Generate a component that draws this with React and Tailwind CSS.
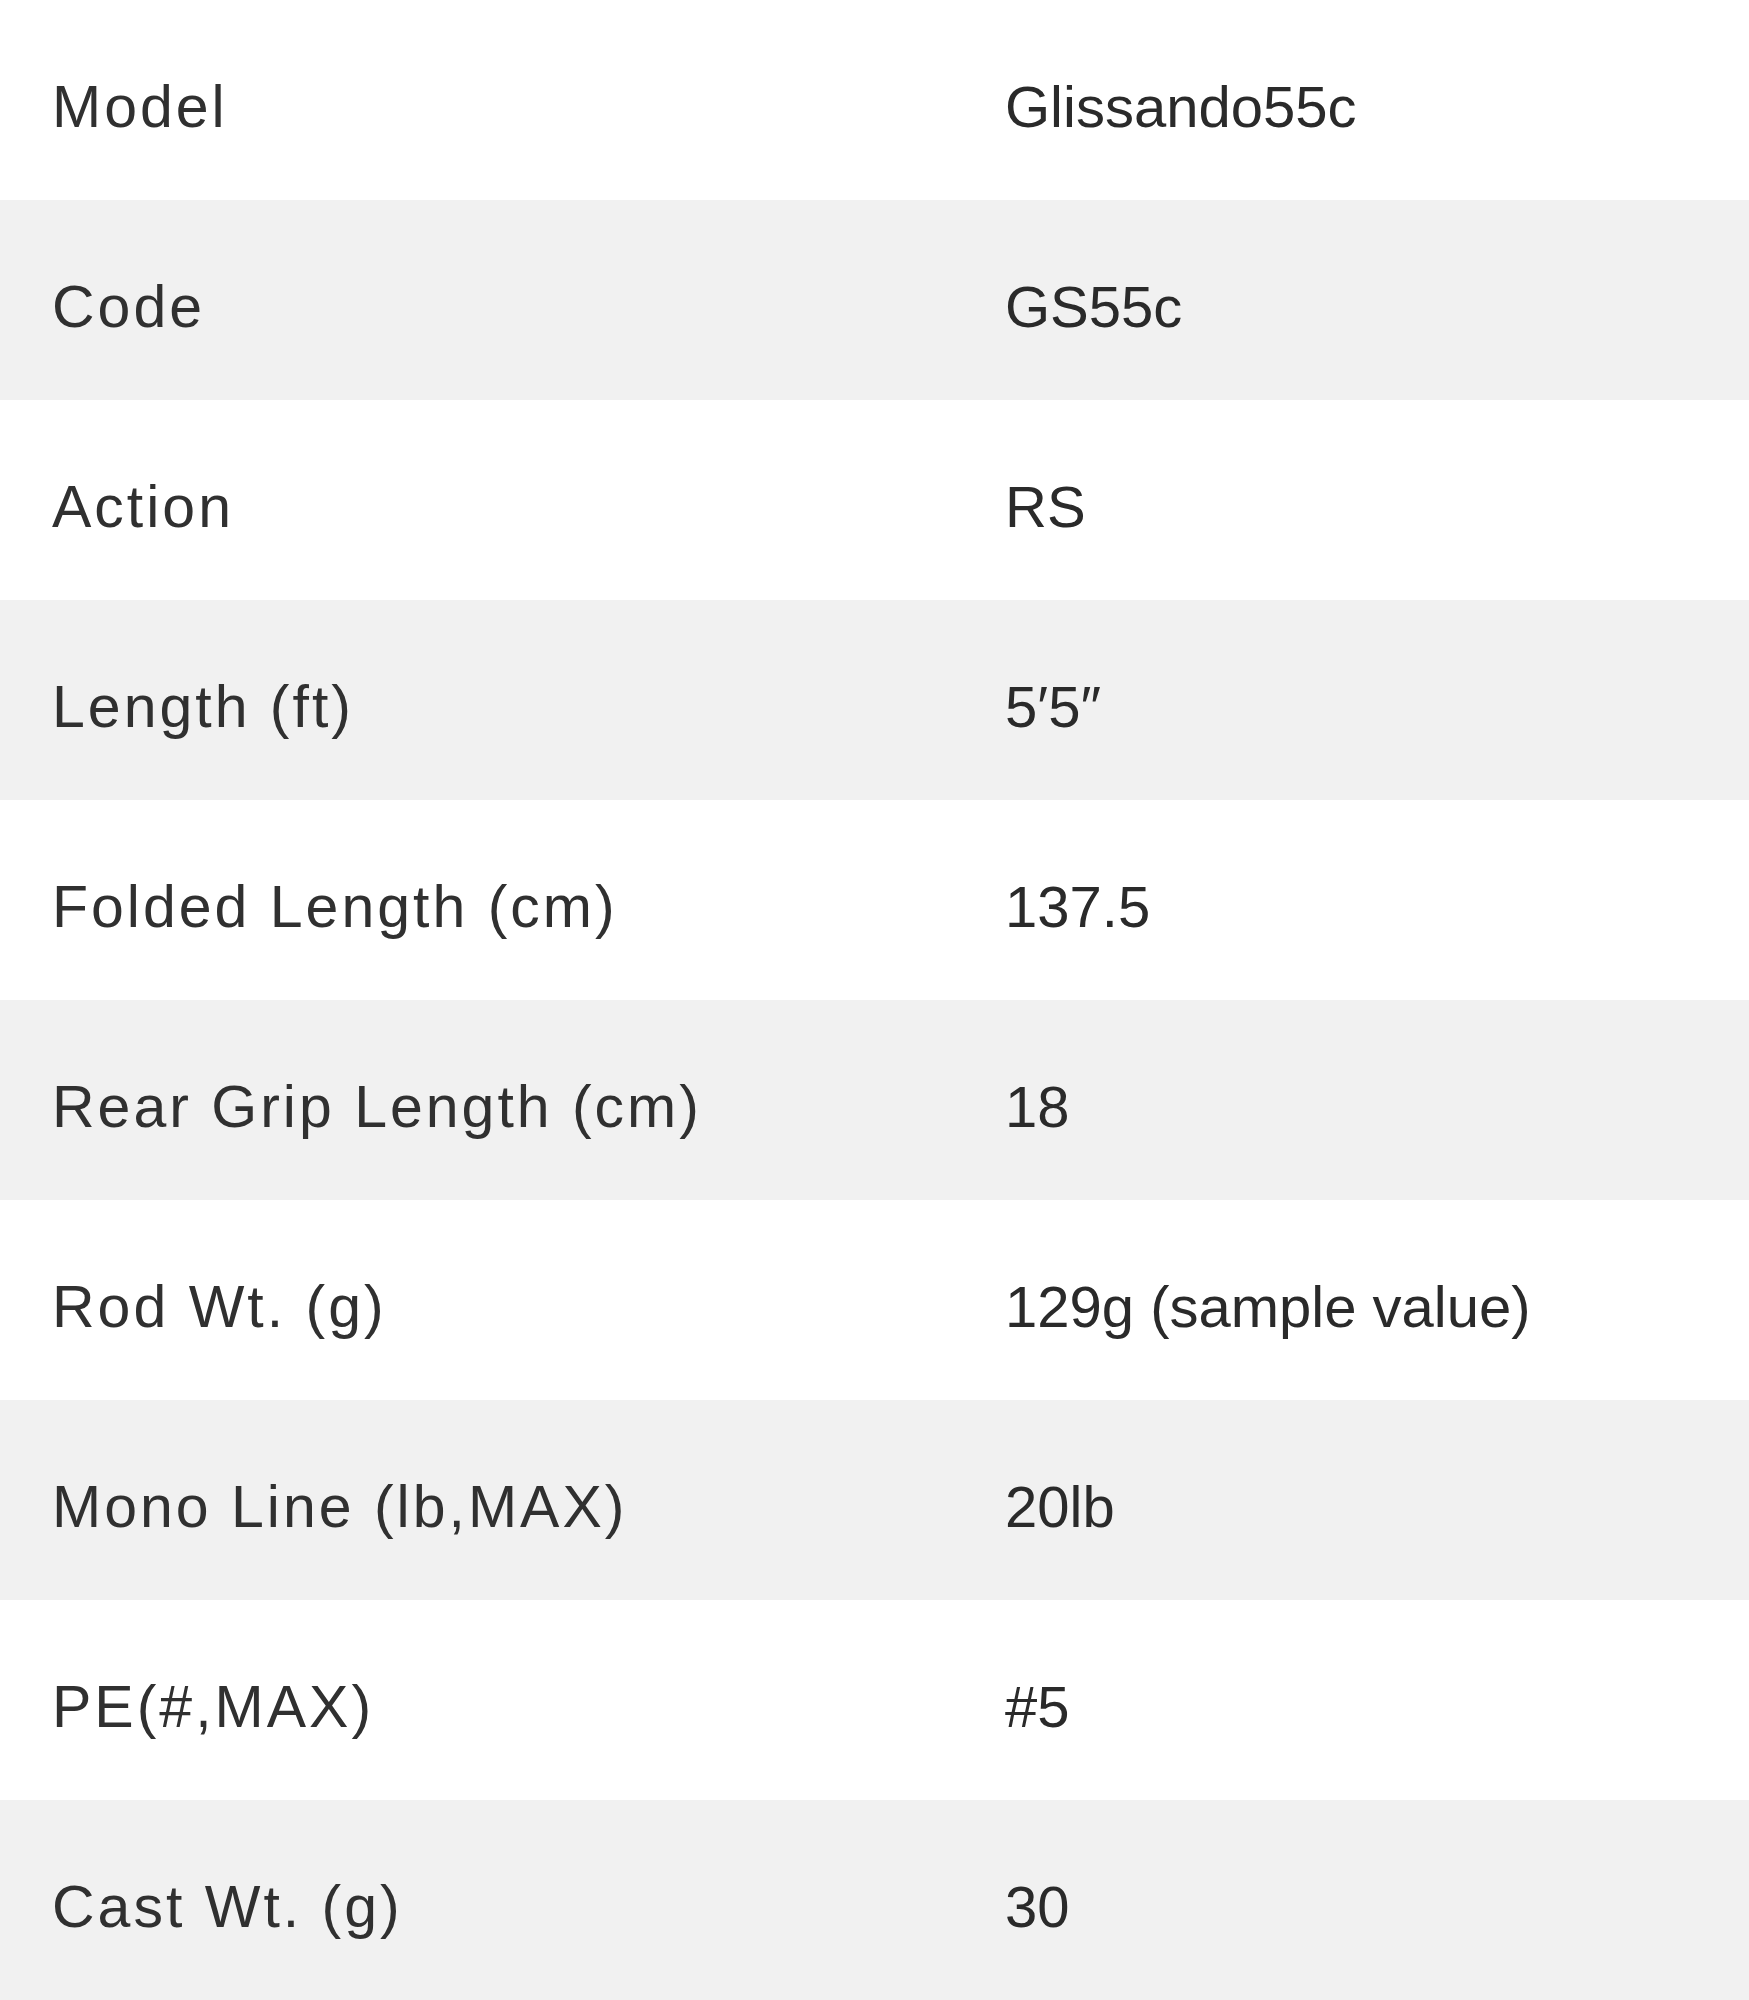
import React from "react";

const rows = [
  ["Model", "Glissando55c"],
  ["Code", "GS55c"],
  ["Action", "RS"],
  ["Length (ft)", "5\u20325\u2033"],
  ["Folded Length (cm)", "137.5"],
  ["Rear Grip Length (cm)", "18"],
  ["Rod Wt. (g)", "129g (sample value)"],
  ["Mono Line (lb,MAX)", "20lb"],
  ["PE(#,MAX)", "#5"],
  ["Cast Wt. (g)", "30"],
];

export default function App() {
  return (
    <div className="w-[1749px] bg-white font-['Liberation_Sans',Arial,sans-serif]">
      {rows.map(([label, value], i) => (
        <div
          key={label}
          className={
            "flex h-[200px] items-center pt-[14px] " +
            (i % 2 === 0 ? "bg-white" : "bg-[#f1f1f1]")
          }
        >
          <div className="w-[1005px] shrink-0 pl-[52px] text-[59px] leading-none tracking-[3px] text-[#303030]">
            {label}
          </div>
          <div className="flex-1 text-[58px] leading-none text-[#2a2a2a]">
            {value}
          </div>
        </div>
      ))}
    </div>
  );
}
